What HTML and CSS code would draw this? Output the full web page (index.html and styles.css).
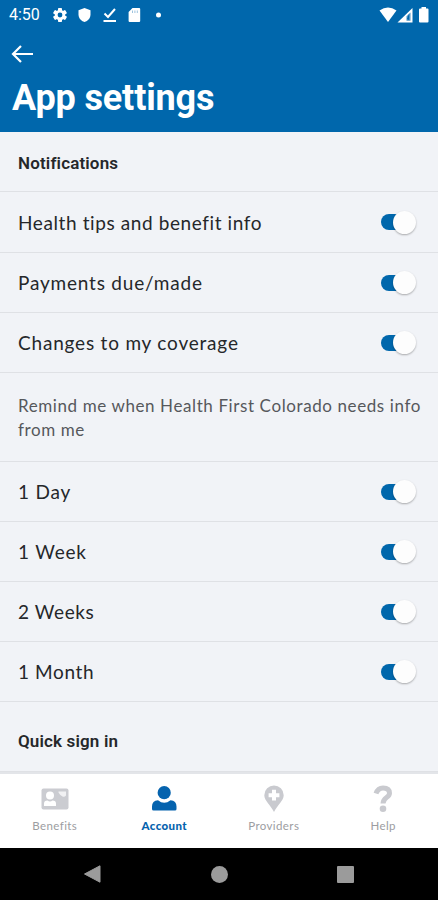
FILE: index.html
```html
<!DOCTYPE html>
<html lang="en">

<head>
  <meta charset="UTF-8" />
  <meta name="viewport" content="width=device-width, initial-scale=1.0" />
  <title>App settings</title>
  <link rel="stylesheet" href="styles.css">
</head>

<body>
  <header class="header">
    <div class="status-bar">
      <span class="time">4:50</span>
      <svg class="status-left" width="114" height="20" viewBox="0 0 114 20" fill="#fff">
        <g transform="translate(8 10)">
          <rect x="-2" y="-7" width="4" height="14" rx="0.8" />
          <rect x="-2" y="-7" width="4" height="14" rx="0.8" transform="rotate(60)" />
          <rect x="-2" y="-7" width="4" height="14" rx="0.8" transform="rotate(120)" />
          <circle r="5.2" />
          <circle r="2.4" fill="#0067ac" />
        </g>
        <path d="M32.500 3 38.500 5.300V9.500C38.500 13 36 16 32.500 17 29 16 26.500 13 26.500 9.500V5.300Z" />
        <path d="M52.500 8.500 56 12 63 4" fill="none" stroke="#fff" stroke-width="2" />
        <rect x="51.500" y="15" width="12.500" height="2" />
        <path d="M80.500 3H87.200Q88.200 3 88.200 4V16Q88.200 17 87.200 17H77.600Q76.600 17 76.600 16V7Z" />
        <path d="M80.500 5.500V8M82.900 5.500V8M85.300 5.500V8" stroke="#9cc3df" stroke-width="1" />
        <circle cx="106.500" cy="10" r="2.500" />
      </svg>
      <svg class="status-right" width="52" height="18" viewBox="0 0 52 18" fill="#fff">
        <path d="M0.500 4.500Q9 -1.500 17.500 4.500L9 16Z" />
        <path d="M18.500 16.500 33.500 2V16.500Z" />
        <path d="M27.500 14.800V10.300L31.500 6.500V14.800Z" fill="#4d94c5" />
        <path d="M28 13 30 8V14Z" fill="#0067ac" />
        <path d="M42.500 2.500V1H47V2.500H48.500Q49.500 2.500 49.500 3.500V15.500Q49.500 16.500 48.500 16.500H41Q40 16.500 40 15.500V3.500Q40 2.500 41 2.500Z" />
      </svg>
    </div>
    <svg class="back" width="24" height="20" viewBox="0 0 24 20" fill="none" stroke="#fff" stroke-width="2.200">
      <path d="M10 2 2 10 10 18M2 10H22" />
    </svg>
    <h1>App settings</h1>
  </header>

  <main class="settings">
    <h2 class="section-title">Notifications</h2>
    <div class="row"><span class="tight">Health tips and benefit info</span><span class="toggle"></span></div>
    <div class="row"><span>Payments due/made</span><span class="toggle"></span></div>
    <div class="row"><span>Changes to my coverage</span><span class="toggle"></span></div>
    <p class="note">Remind me when Health First Colorado needs info from me</p>
    <div class="row"><span>1 Day</span><span class="toggle"></span></div>
    <div class="row"><span>1 Week</span><span class="toggle"></span></div>
    <div class="row"><span class="tight">2 Weeks</span><span class="toggle"></span></div>
    <div class="row"><span class="tight">1 Month</span><span class="toggle"></span></div>
    <h2 class="section-title last">Quick sign in</h2>
  </main>

  <nav class="tabs">
    <a class="tab">
      <svg width="28" height="28" viewBox="0 0 28 28" fill="#cbccd1">
        <rect x="0.500" y="3.500" width="27" height="21" rx="2" />
        <circle cx="9" cy="10.500" r="4" fill="#fff" />
        <path d="M3 21V18.500Q3 15.500 6.500 15.500Q9 17.500 11.500 15.500Q15 15.500 15 18.500V21Z" fill="#fff" />
        <path d="M17.500 6.500H25V10.500Q23.500 12.500 21.500 11.500Q19.500 11 17.500 7.500Z" fill="#f1f1f3" />
      </svg>
      <span>Benefits</span>
    </a>
    <a class="tab active">
      <svg width="28" height="28" viewBox="0 0 28 28" fill="#0563ae">
        <circle cx="14.200" cy="7.700" r="6.600" />
        <path d="M2 24V21.500Q2 15.500 8 15.200Q14.200 20.500 20.500 15.200Q26.500 15.500 26.500 21.500V24Q26.500 25.500 25 25.500H3.500Q2 25.500 2 24Z" />
      </svg>
      <span>Account</span>
    </a>
    <a class="tab">
      <svg width="28" height="28" viewBox="0 0 28 28" fill="#c9cacf">
        <path d="M14 0.500A9.700 9.700 0 0 1 23.700 10.200C23.700 15.500 17.500 20 14 27C10.500 20 4.300 15.500 4.300 10.200A9.700 9.700 0 0 1 14 0.500Z" />
        <path d="M14 4.800V15.600M8.600 10.200H19.400" stroke="#fff" stroke-width="4" />
      </svg>
      <span>Providers</span>
    </a>
    <a class="tab">
      <svg width="28" height="28" viewBox="0 0 28 28" fill="none">
        <path d="M7 8.500Q9 3 14 3C18.500 3 20.500 5 20.500 8.200C20.500 12.500 14 12.500 14 18.500" stroke="#c9cacf" stroke-width="5" />
        <circle cx="14" cy="23.800" r="3.300" fill="#c9cacf" />
      </svg>
      <span>Help</span>
    </a>
  </nav>

  <div class="system-nav">
    <svg width="18" height="20" viewBox="0 0 18 20" fill="#9b9b9b"><path d="M1.500 10 17 1.800V18.200Z" stroke="#9b9b9b" stroke-linejoin="round" /></svg>
    <span class="home"></span>
    <span class="recent"></span>
  </div>
</body>

</html>
```
FILE: styles.css
```css
:root {
  --blue: #0067ac;
  --background: #f1f3f7;
  --line: #dfe1e5;
  --text-main: #25272a;
}

* {
  box-sizing: border-box;
}

body {
  margin: 0;
  width: 438px;
  height: 900px;
  display: flex;
  flex-direction: column;
  overflow: hidden;
  font-family: Lato, "Open Sans", sans-serif;
  background: var(--background);
  color: var(--text-main);
}

.header {
  height: 132px;
  flex: none;
  background: var(--blue);
  color: #fff;
}

.status-bar {
  height: 29px;
  padding: 0 7px 0 9px;
  display: flex;
  align-items: center;
}

.time {
  width: 43px;
  font-family: Roboto, sans-serif;
  font-size: 16px;
}

.status-right {
  margin-left: auto;
}

.back {
  display: block;
  margin: 15px 0 0 11px;
}

h1 {
  margin: 13px 0 0 12px;
  font-family: Roboto, sans-serif;
  font-size: 36px;
  line-height: 42px;
  font-weight: 700;
  letter-spacing: -0.15px;
}

.settings {
  height: 640px;
  flex: none;
}

.section-title {
  height: 60px;
  margin: 0;
  padding: 3px 18px 0;
  display: flex;
  align-items: center;
  border-bottom: 1px solid var(--line);
  font-family: Roboto, sans-serif;
  font-size: 17px;
  font-weight: 600;
  letter-spacing: 0.15px;
}

.section-title + .row {
  height: 61px;
}

.section-title.last {
  height: 70px;
  padding-top: 9px;
}

.row {
  height: 60px;
  padding: 0 22px 0 18px;
  display: flex;
  align-items: center;
  justify-content: space-between;
  border-bottom: 1px solid var(--line);
  font-size: 19px;
  letter-spacing: 0.8px;
}

.tight {
  letter-spacing: 0.6px;
}

.toggle {
  width: 35px;
  height: 24px;
  display: flex;
  align-items: center;
}

.toggle::before {
  content: "";
  width: 24px;
  height: 16px;
  margin-right: -12px;
  border-radius: 8px;
  background: var(--blue);
}

.toggle::after {
  content: "";
  width: 23px;
  height: 23px;
  flex: none;
  border-radius: 50%;
  background: #fdfdfd;
  box-shadow: 0 1px 2px rgba(0, 0, 0, 0.3);
}

.note {
  height: 89px;
  margin: 0;
  padding: 21px 0 0 18px;
  border-bottom: 1px solid var(--line);
  color: #56585c;
  font-size: 17px;
  line-height: 24px;
  letter-spacing: 0.6px;
}

.tabs {
  height: 76px;
  flex: none;
  display: flex;
  background: #fff;
  border-top: 2px solid #e3e5e9;
}

.tab {
  flex: 1;
  padding-top: 11px;
  display: flex;
  flex-direction: column;
  align-items: center;
  color: #9c9da1;
  font-size: 11.5px;
  line-height: 16px;
  letter-spacing: 0.4px;
}

.tab span {
  margin-top: 5px;
}

.tab.active {
  color: #0563ae;
  font-weight: 900;
}

.system-nav {
  height: 52px;
  flex: none;
  padding: 0 84px 0 83px;
  display: flex;
  align-items: center;
  justify-content: space-between;
  background: #000;
}

.home,
.recent {
  width: 17px;
  height: 17px;
  background: #9b9b9b;
  border-radius: 50%;
}

.recent {
  border-radius: 1px;
}
```
